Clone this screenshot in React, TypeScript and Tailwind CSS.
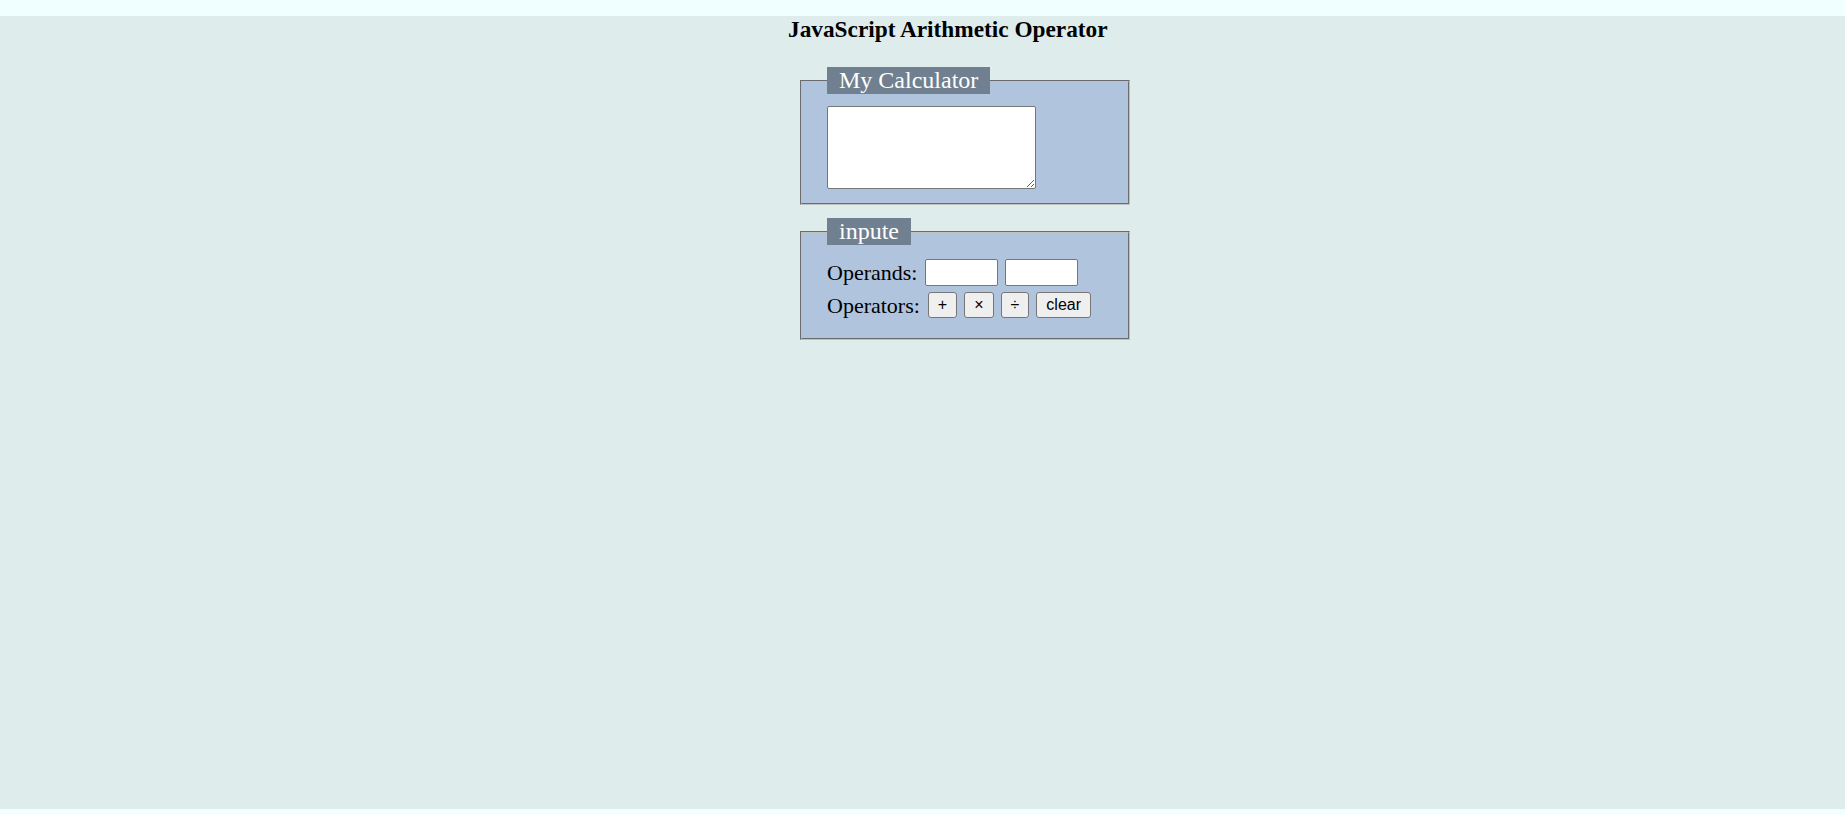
import React from "react";

const serif = "font-['Liberation_Serif','Times_New_Roman',serif]";
const sans = "font-['Liberation_Sans',Arial,sans-serif]";

function OpButton({ label }: { label: string }) {
  return (
    <button
      className={`${sans} text-[16px] leading-[18px] px-[9px] py-[3px] bg-[#efefef] text-black border border-[#767676] rounded-[3px]`}
    >
      {label}
    </button>
  );
}

export default function App() {
  return (
    <div className={`min-h-[814px] bg-[#f0ffff] pt-[16px] ${serif}`}>
      <div className="h-[793px] bg-[#deecec]">
        <div className="ml-[788px] text-[23.3px] leading-[26px] font-bold text-black">JavaScript Arithmetic Operator</div>

        <div className="ml-[800px] w-[330px] mt-[25px] flex flex-col gap-[13px]">
          <fieldset className="bg-[#b0c4de] border-2 border-[#c0c0c0] [border-style:groove] px-[25px] pt-[12px] pb-[14px]">
            <legend className="bg-[#708090] text-white text-[24px] leading-[27px] px-[12px]">My Calculator</legend>
            <textarea className="block w-[209px] h-[83px] bg-white border border-[#767676] rounded-[2px]" />
          </fieldset>

          <fieldset className="bg-[#b0c4de] border-2 border-[#c0c0c0] [border-style:groove] px-[25px] pt-[14px] pb-[20px]">
            <legend className="bg-[#708090] text-white text-[24px] leading-[27px] px-[12px]">inpute</legend>
            <div className="flex items-center text-[22px] leading-[25px] text-black">
              <span>Operands:</span>
              <input type="text" className="ml-[8px] w-[73px] h-[27px] bg-white border border-[#767676] rounded-[2px]" />
              <input type="text" className="ml-[7px] w-[73px] h-[27px] bg-white border border-[#767676] rounded-[2px]" />
            </div>
            <div className="flex items-center text-[22px] leading-[25px] text-black mt-[6px]">
              <span>Operators:</span>
              <div className="ml-[8px] flex gap-[7px]">
                <OpButton label="+" />
                <OpButton label="×" />
                <OpButton label="÷" />
                <OpButton label="clear" />
              </div>
            </div>
          </fieldset>
        </div>
      </div>
    </div>
  );
}
